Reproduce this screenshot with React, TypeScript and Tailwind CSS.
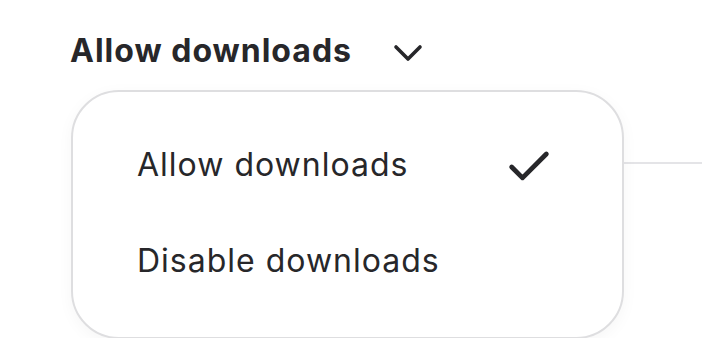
import { Check, ChevronDown } from 'lucide-react';

const OPTIONS = [
  { id: 'allow', label: 'Allow downloads', selected: true },
  { id: 'disable', label: 'Disable downloads', selected: false },
];

export default function App() {
  return (
    <div className="relative h-[338px] w-[702px] overflow-hidden bg-white font-['Inter',sans-serif] text-[#27272a]">
      {/* divider behind the menu */}
      <div className="absolute left-[600px] top-[162px] h-[2px] w-[102px] bg-[#e4e4e7]" />

      {/* Trigger */}
      <button className="ml-[70px] mt-[33px] flex items-center gap-[32px] text-[32px] font-bold leading-[36px] tracking-[1px]">
        <span>Allow downloads</span>
        <ChevronDown className="h-[48px] w-[48px] -my-[6px] translate-y-[2px]" strokeWidth={1.8} />
      </button>

      {/* Menu */}
      <div className="relative ml-[71px] mt-[21px] h-[249px] w-[553px] rounded-[48px] border-2 border-[#dedee0] bg-white pt-[55px] shadow-[0_4px_16px_rgba(0,0,0,0.04)]">
        {OPTIONS.map((opt) => (
          <div
            key={opt.id}
            className="flex h-[96px] items-start justify-between pl-[64px] pr-[67px]"
          >
            <span className="text-[32px] font-normal leading-[36px] tracking-[1px]">{opt.label}</span>
            {opt.selected && <Check className="-mt-[6px] h-[52px] w-[52px]" strokeWidth={2.2} />}
          </div>
        ))}
      </div>
    </div>
  );
}
